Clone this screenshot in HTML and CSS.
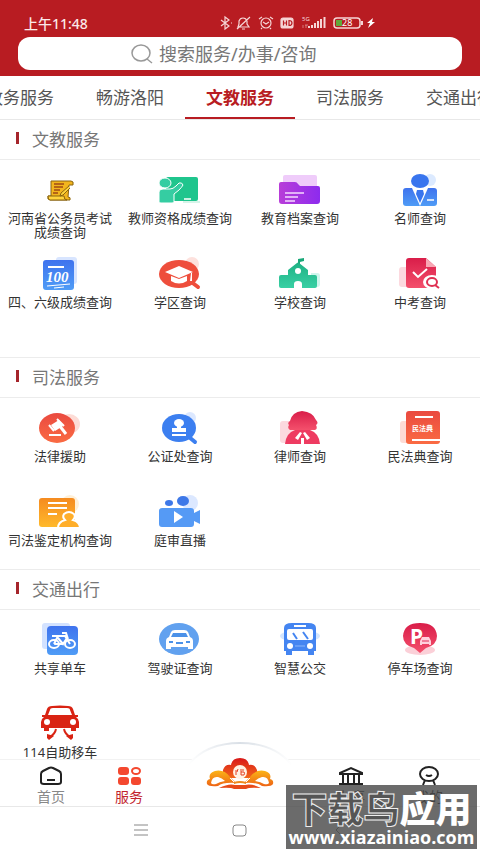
FILE: index.html
```html
<!DOCTYPE html>
<html lang="zh-CN">
<head>
    <meta charset="UTF-8">
    <meta name="viewport" content="width=device-width, initial-scale=1">
    <title>服务</title>
    <link rel="stylesheet" href="styles.css">
</head>
<body>
<header class="header">
    <div class="status">
        <span class="time">上午11:48</span>
        <svg class="status-icons" width="158" height="16" viewBox="0 0 158 16" fill="none" stroke="#f6d5d6" stroke-width="1.2">
            <path d="M1 5l8 6-4 3V2l4 3-8 6M11 8h1"/>
            <path d="M18 12h11l-2-3V6q-1-3-4-3t-4 3v3zM22 14h3M17 14L30 2"/>
            <circle cx="46" cy="8" r="5"/><path d="M43 7l3 2 3-2M39 4l3-2M53 4l-3-2M42 13l-1 1M50 13l1 1"/>
            <rect x="61" y="3" width="12" height="10" rx="2" fill="#f6d5d6"/>
            <path d="M63.500 5.500v5M66.500 5.500v5M63.500 8h3M69 5.500v5q3 0 3-2.500T69 5.500z" stroke="#b81c22"/>
            <path d="M89 13v-2M92 13v-3M95 13V8M98 13V6M101 13V4M104.500 13V2" stroke-width="2"/>
            <path d="M83 10v3M85 10h3M86 10v3" stroke-width="1" opacity=".5"/>
            <rect x="114" y="3" width="26" height="10" rx="3" stroke-width="1.500"/>
            <path d="M116 5h6v6h-6z" fill="#62a83a" stroke="none"/>
            <path d="M142 6v4" stroke-width="2"/>
            <path d="M153 3l-6 5h3l-2 5 7-6h-3z" fill="#fff" stroke="none"/>
            <text x="82" y="6" class="tiny">5G</text>
            <text x="122" y="11" class="battery">28</text>
        </svg>
    </div>
    <form class="search">
        <label for="keyword" aria-label="搜索">
            <svg width="22" height="20" viewBox="0 0 22 20" fill="none" stroke="#999" stroke-width="1.500"><ellipse cx="10" cy="9" rx="9" ry="8"/><path d="M16 15l5 4"/></svg>
        </label>
        <input id="keyword" type="text" placeholder="搜索服务/办事/咨询">
    </form>
</header>

<nav class="tabs">
    <a href="#">政务服务</a>
    <a href="#">畅游洛阳</a>
    <a href="#edu" class="active">文教服务</a>
    <a href="#law">司法服务</a>
    <a href="#traffic">交通出行</a>
</nav>

<main class="content">
    <section class="group group-tall" id="edu">
        <h2>文教服务</h2>
        <div class="grid">
            <a href="#" class="item">
                <svg viewBox="0 0 48 36">
                    <path d="M15 10h20q3 0 2 4h-4l-1 12q3 0 2 3H14q-3 0-2-4h3z" fill="#f2b51d" stroke="#8a6410"/>
                    <path d="M12 25h16q0 4 3 4H14q-2 0-2-4z" fill="#ffd43c" stroke="#8a6410"/>
                    <path d="M18 13h10M18 16h9M18 19h6M17 22h5" stroke="#a04a14" stroke-width="1.500"/>
                    <path d="M33 15l-8 7-1 3 3-1 7-7" fill="#ffd43c" stroke="#8a6410"/>
                </svg>
                <span>河南省公务员考试成绩查询</span>
            </a>
            <a href="#" class="item">
                <svg viewBox="0 0 48 36">
                    <rect x="10" y="6" width="32" height="24" rx="2" fill="#1fc58d"/>
                    <path d="M27 31h17" stroke="#c9f1e2" stroke-width="1.500"/>
                    <path d="M28 27h7v2h-7z" fill="#c9f1e2"/>
                    <ellipse cx="9" cy="12" rx="6" ry="5" fill="#35cda2" stroke="#fff"/>
                    <path d="M3 31V21q0-3 4-3h7q3 0 6-3l3-3q3-1 4 2-1 2-4 5l-5 4v8q0 1-2 1H5q-2 0-2-1z" fill="#35cda2" stroke="#fff"/>
                </svg>
                <span>教师资格成绩查询</span>
            </a>
            <a href="#" class="item">
                <svg viewBox="0 0 48 36">
                    <rect x="7" y="4" width="34" height="20" rx="2" fill="#efccfa"/>
                    <path d="M3 13q0-2 2-2h14q2 0 3 2l2 2h18q2 0 2 2v13q0 3-3 3H6q-3 0-3-3z" fill="url(#purple)"/>
                    <path d="M9 22h19M9 26h13M9 30h10" stroke="#f5d9ff" stroke-width="1.500"/>
                </svg>
                <span>教育档案查询</span>
            </a>
            <a href="#" class="item">
                <svg viewBox="0 0 48 36">
                    <circle cx="34" cy="9" r="6" fill="#dceaff"/>
                    <ellipse cx="24" cy="10" rx="9" ry="7" fill="#3975ee"/>
                    <path d="M7 20q0-3 3-3h28q3 0 3 3v12q0 3-3 3H10q-3 0-3-3z" fill="url(#blue)"/>
                    <path d="M16 17l8 18 8-18z" fill="#fff"/>
                    <path d="M21 19h6l1 4-4 9-4-9z" fill="#3975ee"/>
                    <path d="M31 29h7" stroke="#fff" stroke-width="1.500"/>
                </svg>
                <span>名师查询</span>
            </a>
            <a href="#" class="item">
                <svg viewBox="0 0 48 36">
                    <rect x="20" y="2" width="21" height="27" rx="3" fill="#d8e5ff"/>
                    <rect x="7" y="5" width="31" height="30" rx="3" fill="url(#blue)"/>
                    <path d="M12 12h16" stroke="#fff" stroke-width="2"/>
                    <text x="10" y="27" class="score">100</text>
                    <path d="M11 31l23-2M18 33l10-1" stroke="#fff"/>
                </svg>
                <span>四、六级成绩查询</span>
            </a>
            <a href="#" class="item">
                <svg viewBox="0 0 48 36">
                    <circle cx="36" cy="9" r="7" fill="#fde1dd"/>
                    <path d="M34 26l8 6" stroke="#ee4e3c" stroke-width="4" stroke-linecap="round"/>
                    <ellipse cx="23" cy="19" rx="20" ry="14" fill="#ee4e3c"/>
                    <path d="M9 17l14-6 14 6-14 6z" fill="#fff"/>
                    <path d="M15 21v5q8 5 16 0v-5l-8 3zM35 18h1v8h-2z" fill="#fff"/>
                </svg>
                <span>学区查询</span>
            </a>
            <a href="#" class="item">
                <svg viewBox="0 0 48 36">
                    <path d="M35 18h6q3 0 3 3v8q0 3-3 3h-6z" fill="#cff5ec"/>
                    <path d="M22 9V4l6-1v3l-4 1v2z" fill="#18a878"/>
                    <path d="M3 22q0-2 2-2h7v-5l9-7q1-1 2 0l9 7v5h7q2 0 2 2v9q0 2-2 2H26v-4q0-3-4-3t-4 3v4H5q-2 0-2-2z" fill="url(#green)"/>
                    <circle cx="22" cy="16" r="3" fill="#fff"/>
                </svg>
                <span>学校查询</span>
            </a>
            <a href="#" class="item">
                <svg viewBox="0 0 48 36">
                    <rect x="3" y="12" width="16" height="20" rx="3" fill="#fcd9df"/>
                    <path d="M10 6q0-3 3-3h17l10 9v18q0 3-3 3H13q-3 0-3-3z" fill="url(#pink)"/>
                    <path d="M30 3l10 9H30z" fill="#f8a7b4"/>
                    <path d="M17 17l5 5 9-8" fill="none" stroke="#fff" stroke-width="2"/>
                    <ellipse cx="36" cy="27" rx="9" ry="7" fill="#fff"/>
                    <ellipse cx="36" cy="27" rx="5" ry="4" fill="none" stroke="#df3052" stroke-width="2"/>
                    <path d="M39 30l4 3" stroke="#df3052" stroke-width="2"/>
                </svg>
                <span>中考查询</span>
            </a>
        </div>
    </section>

    <section class="group" id="law">
        <h2>司法服务</h2>
        <div class="grid">
            <a href="#" class="item">
                <svg viewBox="0 0 48 36">
                    <ellipse cx="33" cy="15" rx="11" ry="10" fill="#fddcd6"/>
                    <ellipse cx="21" cy="19" rx="18" ry="15" fill="url(#red)"/>
                    <path d="M15 16l8-5 4 6-8 5z" fill="#fff"/>
                    <path d="M23 16l7 9" stroke="#fff" stroke-width="3"/>
                    <path d="M13 16l5 6M21 10l7 7M13 26h12" stroke="#fff" stroke-width="2"/>
                </svg>
                <span>法律援助</span>
            </a>
            <a href="#" class="item">
                <svg viewBox="0 0 48 36">
                    <circle cx="34" cy="9" r="6" fill="#dce8ff"/>
                    <path d="M33 28l6 5" stroke="#3c7ff0" stroke-width="4" stroke-linecap="round"/>
                    <ellipse cx="23" cy="19" rx="17" ry="14" fill="#3c7ff0"/>
                    <ellipse cx="23" cy="14" rx="5" ry="4" fill="#fff"/>
                    <path d="M21 16h4v3h5v4H16v-4h5zM16 25h14v2H16z" fill="#fff"/>
                </svg>
                <span>公证处查询</span>
            </a>
            <a href="#" class="item">
                <svg viewBox="0 0 48 36">
                    <rect x="4" y="12" width="16" height="22" rx="3" fill="#fcd9df"/>
                    <path d="M14 12q2-9 12-10 11 1 14 9 3 3 0 5 2 4-1 5H14q-3-2-1-5-2-2 1-4z" fill="url(#pink)"/>
                    <path d="M9 35q1-11 10-14h15q9 3 10 14z" fill="#ee3b61"/>
                    <path d="M24 23l-5 6 3 2 4-7zM29 23l5 6-3 2-4-7zM25 29h3v6h-3z" fill="#fff"/>
                </svg>
                <span>律师查询</span>
            </a>
            <a href="#" class="item">
                <svg viewBox="0 0 48 36">
                    <rect x="4" y="12" width="16" height="22" rx="3" fill="#fddbd5"/>
                    <path d="M10 5q0-3 3-3h28q3 0 3 3v27q0 3-3 3H13q-3 0-3-3z" fill="url(#red)"/>
                    <path d="M19 8h18M16 31h28" stroke="#fff" stroke-width="2"/>
                    <text x="16" y="22" class="book">民法典</text>
                </svg>
                <span>民法典查询</span>
            </a>
            <a href="#" class="item">
                <svg viewBox="0 0 48 36">
                    <circle cx="34" cy="11" r="9" fill="#fff0d8"/>
                    <rect x="3" y="5" width="36" height="29" rx="3" fill="url(#orange)"/>
                    <path d="M12 10h19M12 15h19M12 21h9" stroke="#fff" stroke-width="2"/>
                    <path d="M22 35q0-6 7-8-3-3-1-6 5-4 10 0 2 3-1 6 7 2 7 8z" fill="#ffae2a" stroke="#fff" stroke-width="2"/>
                </svg>
                <span>司法鉴定机构查询</span>
            </a>
            <a href="#" class="item">
                <svg viewBox="0 0 48 36">
                    <circle cx="34" cy="10" r="8" fill="#dce8ff"/>
                    <ellipse cx="13" cy="10" rx="4" ry="3" fill="#3d78e8"/>
                    <ellipse cx="27" cy="8" rx="6" ry="5" fill="#3d78e8"/>
                    <path d="M3 18q0-3 3-3h29q3 0 3 3v2l6-3v14l-6-3v3q0 3-3 3H6q-3 0-3-3z" fill="#559af5"/>
                    <path d="M18 18l9 6-9 6z" fill="#fff"/>
                </svg>
                <span>庭审直播</span>
            </a>
        </div>
    </section>

    <section class="group" id="traffic">
        <h2>交通出行</h2>
        <div class="grid">
            <a href="#" class="item">
                <svg viewBox="0 0 48 36">
                    <rect x="6" y="2" width="28" height="26" rx="3" fill="#d3e2ff"/>
                    <rect x="11" y="5" width="31" height="29" rx="4" fill="url(#blue)"/>
                    <g fill="none" stroke="#fff" stroke-width="2"><ellipse cx="18" cy="23" rx="5" ry="4"/><ellipse cx="34" cy="23" rx="5" ry="4"/><path d="M18 23l4-8h7l5 8M22 17l5 6 4-6M16 15h6M18 23h9M26 12h4l2 6"/></g>
                </svg>
                <span>共享单车</span>
            </a>
            <a href="#" class="item">
                <svg viewBox="0 0 48 36">
                    <ellipse cx="23" cy="18" rx="20" ry="16" fill="#61a1ef"/>
                    <path d="M15 11q1-2 4-2h9q3 0 4 2l2 5q3 1 3 4v8h-5v-2H15v2h-5v-8q0-3 3-4z" fill="#fff"/>
                    <path d="M17 12h13l2 4H15zM13 20h4v2h-4zM30 20h4v2h-4zM20 21h7v2h-7z" fill="#4b91e8"/>
                </svg>
                <span>驾驶证查询</span>
            </a>
            <a href="#" class="item">
                <svg viewBox="0 0 48 36">
                    <ellipse cx="24" cy="15" rx="20" ry="6" fill="#d4e6ff"/>
                    <path d="M8 7q0-5 8-5h16q8 0 8 5v23h-2v4h-6v-4H16v4h-6v-4H8z" fill="#4485f1"/>
                    <rect x="11" y="8" width="26" height="11" rx="2" fill="#fff"/>
                    <path d="M18 5h12" stroke="#fff" stroke-width="2"/>
                    <path d="M17 12l4 6M27 11l5 7" stroke="#4485f1" stroke-width="2"/>
                    <circle cx="14" cy="25" r="3" fill="#fff"/><circle cx="34" cy="25" r="3" fill="#fff"/>
                    <path d="M19 25h10" stroke="#8cb7fa"/>
                </svg>
                <span>智慧公交</span>
            </a>
            <a href="#" class="item">
                <svg viewBox="0 0 48 36">
                    <ellipse cx="24" cy="29" rx="15" ry="5" fill="#fbd0d8"/>
                    <path d="M24 32l-6-5Q7 24 7 15 8 2 24 2t17 13q0 9-11 12z" fill="url(#pink)"/>
                    <text x="14" y="23" class="parking">P</text>
                    <path d="M24 20l2-4h7l2 4v4h-2v-1h-7v1h-2z" fill="#ffd2dc"/>
                    <path d="M26 20h7" stroke="#e02c56"/>
                </svg>
                <span>停车场查询</span>
            </a>
            <a href="#" class="item">
                <svg viewBox="0 0 48 36">
                    <path d="M11 4q1-3 5-3 8-1 16 0 4 0 5 3l2 6h3v2h-2q3 2 3 5v6h-3v3h-5v-3H13v3H8v-3H5v-6q0-3 3-5H6v-2h3z" fill="#d92313"/>
                    <path d="M14 5q0-2 3-2h14q3 0 3 2l2 5H12z" fill="#fff"/>
                    <circle cx="11" cy="17" r="3" fill="#fff"/><circle cx="37" cy="17" r="3" fill="#fff"/>
                    <path d="M20 24q-1 5-6 8M28 24q1 5 6 8" fill="none" stroke="#d92313" stroke-width="2"/>
                    <path d="M11 29l7 2-5 4-2-2zM37 29l-7 2 5 4 2-2z" fill="#d92313"/>
                </svg>
                <span>114自助移车</span>
            </a>
        </div>
    </section>
</main>

<nav class="bottom-nav">
    <a href="#">
        <svg width="26" height="20" viewBox="0 0 26 20" fill="none" stroke="#222" stroke-width="2"><path d="M3 8q0-2 2-3l6-3q2-1 4 0l6 3q2 1 2 3v8q0 2-3 2H6q-3 0-3-2zM9 14h8"/></svg>
        首页
    </a>
    <a href="#" class="active">
        <svg width="26" height="20" viewBox="0 0 26 20" fill="#f4482f"><rect x="2" y="1" width="11" height="8" rx="3"/><rect x="2" y="11" width="11" height="8" rx="3"/><rect x="15" y="11" width="10" height="8" rx="3"/><ellipse cx="20" cy="5" rx="4" ry="3" fill="none" stroke="#f4482f" stroke-width="2"/></svg>
        服务
    </a>
    <a href="#" class="center" aria-label="洛阳">
        <svg width="112" height="64" viewBox="0 0 112 64">
            <path d="M0 28Q18 1 56 1t56 27v36H0z" fill="#fff"/>
            <path d="M4 23Q22 1 56 1t52 22" fill="none" stroke="url(#arc)" stroke-width="2"/>
            <path d="M46 36q-8-2-7-8 2-6 8-5 1-7 9-7t9 7q6-1 8 5 1 6-7 8z" fill="url(#flower)"/>
            <path d="M23 42q-1-4 3-5-2-6 5-8 9-2 15 6l6 6q-13-1-18 3-9 1-11-2zM89 42q1-4-3-5 2-6-5-8-9-2-15 6l-6 6q13-1 18 3 9 1 11-2z" fill="url(#petal)"/>
            <path d="M27 41q1-7 7-6 4 1 7 4-6 1-9 3-4 1-5-1zM85 41q-1-7-7-6-4 1-7 4 6 1 9 3 4 1 5-1z" fill="#fff"/>
            <path d="M35 46q10-5 16-3h10q6-2 16 3-12-1-15 1H50q-3-2-15-1z" fill="#e84a18"/>
            <path d="M46 36l5 5q5-2 10 0l5-5" fill="none" stroke="#fff"/>
            <path d="M50 40q6-2 12 0v2q-6-2-12 0z" fill="#f08a1c"/>
            <ellipse cx="56" cy="30" rx="7" ry="7" fill="#fff3e5"/>
            <path d="M52 28v5M54 27l-1 3M57 27v6h3q1-2 0-3h-3M58 28h2" fill="none" stroke="#e43e20"/>
        </svg>
    </a>
    <a href="#">
        <svg width="26" height="20" viewBox="0 0 26 20" fill="none" stroke="#222" stroke-width="2"><path d="M2 7l11-5 11 5v1H2zM5 9v8M10 9v8M16 9v8M21 9v8M1 18h24"/></svg>
        办事
    </a>
    <a href="#">
        <svg width="26" height="20" viewBox="0 0 26 20" fill="none" stroke="#222" stroke-width="2"><ellipse cx="13" cy="8" rx="9" ry="7"/><path d="M10 9q3 2 6 0M9 14l-2 5M17 14l2 5"/></svg>
        我的
    </a>
</nav>

<footer class="system-nav">
    <button type="button" aria-label="菜单"><svg width="16" height="16" viewBox="0 0 16 16"><path d="M1 3h14M1 8h14M1 13h14"/></svg></button>
    <button type="button" aria-label="主页"><svg width="16" height="16" viewBox="0 0 16 16"><rect x="1" y="3" width="13" height="11" rx="3"/></svg></button>
    <button type="button" aria-label="返回"><svg width="16" height="16" viewBox="0 0 16 16"><path d="M11 2L5 8l6 6"/></svg></button>
</footer>

<div class="watermark">
    <strong><em>下载鸟</em>应用</strong>
    <span>www.xiazainiao.com</span>
</div>

<!-- 图标共用渐变 -->
<svg class="defs" width="0" height="0">
    <linearGradient id="purple"><stop stop-color="#b83dd8"/><stop offset="1" stop-color="#8d2bee"/></linearGradient>
    <linearGradient id="blue" x2="0" y2="1"><stop stop-color="#3f73ee"/><stop offset="1" stop-color="#4f9cf6"/></linearGradient>
    <linearGradient id="green" x2="0" y2="1"><stop stop-color="#1fb184"/><stop offset="1" stop-color="#39d0a4"/></linearGradient>
    <linearGradient id="pink" x2="0" y2="1"><stop stop-color="#d91d49"/><stop offset="1" stop-color="#f4506c"/></linearGradient>
    <linearGradient id="red" x2="0" y2="1"><stop stop-color="#ea4a40"/><stop offset="1" stop-color="#fa6b43"/></linearGradient>
    <linearGradient id="orange" x2="0" y2="1"><stop stop-color="#f58b20"/><stop offset="1" stop-color="#ffb92b"/></linearGradient>
    <linearGradient id="flower" x2="0" y2="1"><stop stop-color="#d81818"/><stop offset="1" stop-color="#f2661b"/></linearGradient>
    <linearGradient id="petal" x2="0" y2="1"><stop stop-color="#fbb416"/><stop offset="1" stop-color="#ee6415"/></linearGradient>
    <linearGradient id="arc"><stop stop-color="#fff"/><stop offset=".5" stop-color="#d9dfe6"/><stop offset="1" stop-color="#fff"/></linearGradient>
</svg>
</body>
</html>
```
FILE: styles.css
```css
*{
    box-sizing: border-box;
    padding: 0;
    margin: 0;
}
body{
    display: flex;
    flex-direction: column;
    height: 100vh;
    overflow: hidden;
    position: relative;
    background: #fff;
    color: #333;
    font-family: "Noto Sans", "Noto Sans CJK SC", sans-serif;
    font-size: 13px;
}
a{
    color: inherit;
    text-decoration: none;
}
svg{
    display: block;
}

/* 顶部 */
.header{
    flex: none;
    padding: 8px 18px 6px;
    background: #b81c22;
}
.status{
    display: flex;
    justify-content: space-between;
    align-items: center;
    height: 29px;
    padding: 0 84px 0 6px;
    color: #fbe9e9;
}
.time{
    font-size: 14px;
    font-weight: 500;
}
.tiny{
    font-size: 6px;
    fill: #f6d5d6;
    stroke: none;
}
.battery{
    font-size: 9px;
    fill: #fff;
    stroke: none;
}
.search{
    display: flex;
    justify-content: center;
    align-items: center;
    gap: 6px;
    height: 33px;
    padding-right: 24px;
    border-radius: 12px;
    background: #fff;
}
.search input{
    width: 166px;
    border: 0;
    outline: 0;
    background: none;
    font-family: inherit;
    font-size: 18px;
    line-height: 24px;
}
.search input::placeholder{
    color: #777;
}

/* 分类标签 */
.tabs{
    flex: none;
    display: flex;
    justify-content: center;
    height: 44px;
    border-bottom: 1px solid #e8e8e8;
    overflow: hidden;
}
.tabs a{
    flex: 0 0 110px;
    line-height: 44px;
    text-align: center;
    font-size: 17px;
    color: #555;
}
.tabs .active{
    border-bottom: 2px solid #b81c22;
    color: #b81c22;
    font-weight: bold;
}

/* 服务列表 */
.content{
    flex: 1;
    min-height: 0;
    overflow: hidden;
}
.group{
    padding-bottom: 8px;
    border-bottom: 1px solid #ececec;
}
.group-tall{
    padding-bottom: 34px;
}
.group h2{
    display: flex;
    align-items: center;
    gap: 13px;
    height: 40px;
    padding: 0 0 3px 16px;
    border-bottom: 1px solid #ececec;
    font-size: 17px;
    font-weight: normal;
    color: #777;
}
.group h2::before{
    content: "";
    width: 3px;
    height: 12px;
    background: #a5252b;
}
.grid{
    display: grid;
    grid-template-columns: repeat(4, 1fr);
    row-gap: 16px;
    padding-top: 11px;
}
.item{
    display: flex;
    flex-direction: column;
    align-items: center;
    gap: 4px;
    height: 68px;
    padding: 0 6px;
    line-height: 14px;
    text-align: center;
}
.item svg{
    flex: none;
    width: 48px;
    height: 36px;
    fill: none;
}
.score{
    fill: #fff;
    font-family: "Liberation Serif", serif;
    font-size: 15px;
    font-style: italic;
    font-weight: bold;
}
.book{
    fill: #fff;
    font-size: 7px;
    font-weight: bold;
}
.parking{
    fill: #fff;
    font-size: 21px;
    font-weight: bold;
}

/* 底部导航 */
.bottom-nav{
    flex: none;
    display: grid;
    grid-template-columns: 13fr 13fr 24fr 13fr 13fr;
    position: relative;
    height: 48px;
    padding: 0 12px;
    border-top: 1px solid #f2f2f2;
    border-bottom: 1px solid #e8e8e8;
    background: #fff;
}
.bottom-nav a{
    display: flex;
    flex-direction: column;
    align-items: center;
    gap: 2px;
    padding-top: 6px;
    font-size: 14px;
    line-height: 18px;
    color: #888;
}
.bottom-nav .active{
    color: #c2242e;
}
.bottom-nav .center{
    position: absolute;
    left: 50%;
    bottom: 0;
    padding: 0;
    transform: translateX(-50%);
}
.bottom-nav .center + a{
    grid-column: 4;
}
.bottom-nav .center ~ a{
    color: #333;
}
.system-nav{
    flex: none;
    display: flex;
    justify-content: center;
    gap: 83px;
    height: 46px;
}
.system-nav button{
    border: 0;
    background: none;
}
.system-nav svg{
    fill: none;
    stroke: #888;
    stroke-width: 1;
}

/* 右下角水印 */
.watermark{
    position: absolute;
    right: 3px;
    bottom: 4px;
    width: 191px;
    height: 64px;
    padding-top: 8px;
    background: rgba(70, 70, 70, .8);
    color: #fff;
    text-align: center;
    white-space: nowrap;
}
.watermark strong,
.watermark span{
    display: block;
}
.watermark strong{
    font-size: 36px;
    font-weight: 900;
    line-height: 34px;
}
.watermark em{
    color: #555;
    font-style: normal;
    -webkit-text-stroke: 1px #eee;
}
.watermark span{
    font-family: "Open Sans", sans-serif;
    font-size: 18px;
    font-weight: bold;
    line-height: 20px;
}
.defs{
    position: absolute;
}
```
